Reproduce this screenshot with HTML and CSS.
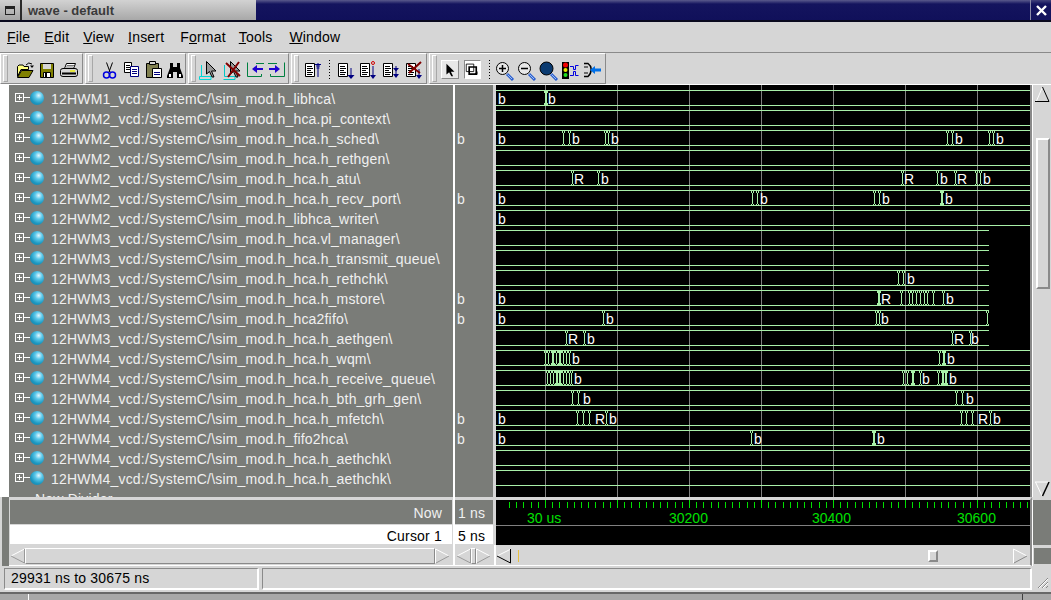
FILE: index.html
```html
<!DOCTYPE html>
<html lang="en">
<head>
<meta charset="utf-8">
<title>wave - default</title>
<link rel="stylesheet" href="styles.css">
</head>
<body>
<svg class="sprite" width="0" height="0" aria-hidden="true">
  <defs>
    <path id="full" d="M496 .5H1030M496 15.500H1030"/>
    <path id="short" d="M496 .5H989M496 15.500H989"/>
    <path id="t" d="M-.5 .5V2.500M1.500 .5V2.500M.5 2.500V13.500M-.5 13.500V15.500M1.500 13.500V15.500"/>
    <path id="T" d="M-1 0H3V3H2V13H3V16H-1V13H0V3H-1Z"/>
    <symbol id="doc" viewBox="0 0 22 22">
      <path d="M3.500 4.500H12.500V17.500H3.500Z" fill="#fff" stroke="#000"/>
      <path d="M5 7.500H10M5 9.500H11M5 11.500H9M5 13.500H11M5 15.500H10" stroke="#000" fill="none"/>
    </symbol>
    <symbol id="mag" viewBox="0 0 22 22">
      <path d="M14 15L20 21" stroke="#2a5fd0" stroke-width="3" fill="none"/>
      <path d="M14.500 15.500L19 20" stroke="#9ec0f0" fill="none"/>
    </symbol>
  </defs>
</svg>
<div class="window">
  <header class="titlebar">
    <div class="wm-btn"><span class="wm-glyph"></span></div>
    <div class="title">wave - default</div>
    <div class="title-fill"></div>
    <div class="wm-close">
      <svg width="21" height="21" viewBox="0 0 21 21"><path d="M6 6L15 15M15 6L6 15" stroke="#fff" stroke-width="2.400" fill="none"/></svg>
    </div>
  </header>

  <nav class="menubar">
    <span><u>F</u>ile</span><span><u>E</u>dit</span><span><u>V</u>iew</span><span><u>I</u>nsert</span><span>F<u>o</u>rmat</span><span><u>T</u>ools</span><span><u>W</u>indow</span>
  </nav>

  <div class="toolbar">
    <div class="group g1">
      <svg class="ico" viewBox="0 0 22 22"><path d="M4.500 17.500V7.500L6 6H10L11 7.500H15.500V10.500H8L4.500 17.500Z" fill="#ffff80" stroke="#000"/><path d="M4.500 18.500L8.500 11.500H20L16 18.500Z" fill="#808000" stroke="#000"/><path d="M13 6Q15.500 2.500 19 5" stroke="#000" fill="none"/><path d="M17 6.500H21L19 9Z" fill="#000"/></svg>
      <svg class="ico" viewBox="0 0 22 22"><path d="M5.500 4.500H18.500V18.500H5.500Z" fill="#808000" stroke="#000"/><path d="M8 5H16V10H8Z" fill="#d6d6d6"/><path d="M8.500 13.500H15.500V18.500H8.500Z" fill="#fff" stroke="#000"/><path d="M10 14H12V18H10Z" fill="#000"/></svg>
      <svg class="ico" viewBox="0 0 22 22"><path d="M7.500 9.500L9.500 4.500H18.500L16.500 9.500Z" fill="#fff" stroke="#000"/><path d="M10 6.500H17M9 8H16" stroke="#777"/><path d="M3.500 11.500Q3.500 9.500 6 9.500H18Q20.500 9.500 20.500 11.500V15.500Q20.500 17.500 18 17.500H6Q3.500 17.500 3.500 15.500Z" fill="#d6d6d6" stroke="#000"/><path d="M5 14.500H19" stroke="#000" stroke-width="2"/><path d="M13 11H18V13H13Z" fill="#e8e840"/></svg>
    </div>
    <div class="group g2">
      <svg class="ico" viewBox="0 0 22 22"><path d="M8.500 3.500L12 13M14.500 3.500L11 13" stroke="#000" fill="none"/><circle cx="8.500" cy="16" r="3" fill="none" stroke="#0000e0" stroke-width="1.500"/><circle cx="14.500" cy="16" r="3" fill="none" stroke="#0000e0" stroke-width="1.500"/></svg>
      <svg class="ico" viewBox="0 0 22 22"><path d="M4.500 3.500H11.500V13.500H4.500Z" fill="#fff" stroke="#000"/><path d="M6 6.500H10M6 8.500H10M6 10.500H10" stroke="#000"/><path d="M10.500 7.500H18.500V17.500H10.500Z" fill="#fff" stroke="#000080"/><path d="M12 10.500H17M12 12.500H17M12 14.500H17" stroke="#000080"/></svg>
      <svg class="ico" viewBox="0 0 22 22"><path d="M4.500 4.500H16.500V18.500H4.500Z" fill="#808050" stroke="#000"/><path d="M7.500 2.500H13.500V5.500H7.500Z" fill="#d6d6d6" stroke="#000"/><path d="M10.500 9.500H19.500V18.500H10.500Z" fill="#fff" stroke="#000"/><path d="M12 13.500H18M12 15.500H18" stroke="#000080"/></svg>
      <svg class="ico" viewBox="0 0 22 22"><path d="M6 4H9V8H13V4H16V9L19 17V19H13V13H9V19H3V17L6 9Z" fill="#000"/><path d="M5 15H7V18H5ZM15 15H17V18H15Z" fill="#fff"/></svg>
    </div>
    <div class="group g3">
      <svg class="ico wide" viewBox="0 0 26 22"><path d="M5.500 6V17.500H15V20.500H3.500V17.500H15" fill="none" stroke="#00d8d8"/><path d="M10.500 2.500V15L13.500 12.500L16 18H18L15.500 12H20Z" fill="#999" stroke="#000"/></svg>
      <svg class="ico" viewBox="0 0 22 22"><path d="M2.500 6V17.500H13V20.500H1.500" fill="none" stroke="#00c8c8"/><path d="M8.500 2.500V15L11.500 12.500L14 18H16L13.500 12H18Z" fill="#999" stroke="#000"/><path d="M4 4L18 17M17 3L6 18" stroke="#800000" stroke-width="2" fill="none"/></svg>
      <svg class="ico" viewBox="0 0 22 22"><path d="M3.500 3.500V17.500H17.500V15" fill="none" stroke="#008040"/><path d="M12 4.500H20" stroke="#008040"/><path d="M8 10L13 6V9H19V11H13V14Z" fill="#2000d0"/></svg>
      <svg class="ico" viewBox="0 0 22 22"><path d="M18.500 3.500V17.500H4.500V15" fill="none" stroke="#008040"/><path d="M2 4.500H11" stroke="#008040"/><path d="M14 10L9 6V9H3V11H9V14Z" fill="#2000d0"/></svg>
    </div>
    <div class="group g4">
      <svg class="ico" viewBox="0 0 22 22"><use href="#doc" width="22" height="22"/><path d="M13 5.500H19M16 4V18M14 7H18M14.500 9H17.500" stroke="#000080" fill="none"/></svg>
      <span class="dots"></span>
      <svg class="ico" viewBox="0 0 22 22"><use href="#doc" width="22" height="22"/><path d="M16 9V17" stroke="#000080"/><path d="M12.500 16H19.500L16 20Z" fill="#000080"/></svg>
      <svg class="ico" viewBox="0 0 22 22"><use href="#doc" width="22" height="22"/><path d="M16 7V17" stroke="#000080"/><path d="M13 16H19L16 20Z" fill="#000080"/><circle cx="16" cy="4" r="1.500" fill="none" stroke="#d00000"/></svg>
      <svg class="ico step" viewBox="0 0 22 22"><use href="#doc" width="22" height="22"/><path d="M16 7V17" stroke="#000080"/><path d="M13 9H19L16 12.500ZM13 15H19L16 19Z" fill="#000080"/></svg>
      <svg class="ico step" viewBox="0 0 22 22"><use href="#doc" width="22" height="22"/><path d="M16 10V17" stroke="#000080"/><path d="M13 16H19L16 20Z" fill="#000080"/><path d="M6 14L18 3M5 5L17 14" stroke="#800000" stroke-width="2" fill="none"/></svg>
    </div>
    <div class="group g5">
      <div class="tool raised"><svg width="16" height="16" viewBox="0 0 18 18"><path d="M5 2V14L8 11.500L10.500 16H12.500L10 11H14Z" fill="#000"/></svg></div>
      <div class="tool pressed"><svg width="15" height="15" viewBox="0 0 18 18"><path d="M1.500 2.500H10.500V11.500H1.500Z" fill="none" stroke="#000"/><path d="M5 6H13.500V14.500H5Z" fill="none" stroke="#000" stroke-width="2"/><path d="M11 15L15 15L15 11Z" fill="#000"/></svg></div>
      <span class="dots"></span>
      <svg class="ico" viewBox="0 0 22 22"><use href="#mag" width="22" height="22"/><circle cx="9.500" cy="9.500" r="6" fill="#e8e8e8" stroke="#000"/><path d="M6 9.500H13M9.500 6V13" stroke="#000" stroke-width="1.500"/></svg>
      <svg class="ico" viewBox="0 0 22 22"><use href="#mag" width="22" height="22"/><circle cx="9.500" cy="9.500" r="6" fill="#e8e8e8" stroke="#000"/><path d="M6 9.500H13" stroke="#000" stroke-width="1.500"/></svg>
      <svg class="ico" viewBox="0 0 22 22"><use href="#mag" width="22" height="22"/><circle cx="9.500" cy="9.500" r="6.500" fill="#0a3a70" stroke="#000"/></svg>
      <svg class="ico" viewBox="0 0 22 22"><path d="M3 3H10V20H3Z" fill="#000"/><circle cx="6.500" cy="6" r="2.500" fill="#f00000"/><circle cx="6.500" cy="11" r="2" fill="#e8e800"/><circle cx="6.500" cy="16" r="2" fill="#20e020"/><path d="M11 7.500H14.500V10.500H16.500V6.500H19.500M11 16.500H14.500V12.500H16.500V16.500H19.500" fill="none" stroke="#0000e0"/></svg>
      <svg class="ico" viewBox="0 0 22 22"><path d="M3 4.500H7Q10 7 10 9V11Q10 15 7 17.500H3" fill="none" stroke="#000" stroke-width="1.500"/><path d="M3 8H7M3 14H7" stroke="#000"/><path d="M9 11L14 7V9.500H20V12.500H14V15Z" fill="#0070e8"/></svg>
    </div>
  </div>

  <main class="panes">
    <div class="strip white"></div>
    <div class="names">
      <div class="row"><span class="tree"></span><span class="ball"></span><span>12HWM1_vcd:/SystemC/\sim_mod.h_libhca\</span></div>
      <div class="row"><span class="tree"></span><span class="ball"></span><span>12HWM2_vcd:/SystemC/\sim_mod.h_hca.pi_context\</span></div>
      <div class="row"><span class="tree"></span><span class="ball"></span><span>12HWM2_vcd:/SystemC/\sim_mod.h_hca.h_sched\</span></div>
      <div class="row"><span class="tree"></span><span class="ball"></span><span>12HWM2_vcd:/SystemC/\sim_mod.h_hca.h_rethgen\</span></div>
      <div class="row"><span class="tree"></span><span class="ball"></span><span>12HWM2_vcd:/SystemC/\sim_mod.h_hca.h_atu\</span></div>
      <div class="row"><span class="tree"></span><span class="ball"></span><span>12HWM2_vcd:/SystemC/\sim_mod.h_hca.h_recv_port\</span></div>
      <div class="row"><span class="tree"></span><span class="ball"></span><span>12HWM2_vcd:/SystemC/\sim_mod.h_libhca_writer\</span></div>
      <div class="row"><span class="tree"></span><span class="ball"></span><span>12HWM3_vcd:/SystemC/\sim_mod.h_hca.vl_manager\</span></div>
      <div class="row"><span class="tree"></span><span class="ball"></span><span>12HWM3_vcd:/SystemC/\sim_mod.h_hca.h_transmit_queue\</span></div>
      <div class="row"><span class="tree"></span><span class="ball"></span><span>12HWM3_vcd:/SystemC/\sim_mod.h_hca.h_rethchk\</span></div>
      <div class="row"><span class="tree"></span><span class="ball"></span><span>12HWM3_vcd:/SystemC/\sim_mod.h_hca.h_mstore\</span></div>
      <div class="row"><span class="tree"></span><span class="ball"></span><span>12HWM3_vcd:/SystemC/\sim_mod.h_hca2fifo\</span></div>
      <div class="row"><span class="tree"></span><span class="ball"></span><span>12HWM3_vcd:/SystemC/\sim_mod.h_hca.h_aethgen\</span></div>
      <div class="row"><span class="tree"></span><span class="ball"></span><span>12HWM4_vcd:/SystemC/\sim_mod.h_hca.h_wqm\</span></div>
      <div class="row"><span class="tree"></span><span class="ball"></span><span>12HWM4_vcd:/SystemC/\sim_mod.h_hca.h_receive_queue\</span></div>
      <div class="row"><span class="tree"></span><span class="ball"></span><span>12HWM4_vcd:/SystemC/\sim_mod.h_hca.h_bth_grh_gen\</span></div>
      <div class="row"><span class="tree"></span><span class="ball"></span><span>12HWM4_vcd:/SystemC/\sim_mod.h_hca.h_mfetch\</span></div>
      <div class="row"><span class="tree"></span><span class="ball"></span><span>12HWM4_vcd:/SystemC/\sim_mod.h_fifo2hca\</span></div>
      <div class="row"><span class="tree"></span><span class="ball"></span><span>12HWM4_vcd:/SystemC/\sim_mod.h_hca.h_aethchk\</span></div>
      <div class="row"><span class="tree"></span><span class="ball"></span><span>12HWM4_vcd:/SystemC/\sim_mod.h_hca.h_aethchk\</span></div>
      <div class="row divider"><span>New Divider</span></div>
    </div>
    <div class="values">
      <div class="val"></div><div class="val"></div><div class="val">b</div><div class="val"></div><div class="val"></div><div class="val">b</div><div class="val"></div><div class="val"></div><div class="val"></div><div class="val"></div><div class="val">b</div><div class="val">b</div><div class="val"></div><div class="val"></div><div class="val"></div><div class="val"></div><div class="val">b</div><div class="val">b</div>
    </div>
    <div class="wave">
      <svg class="wave-svg" width="534" height="412" viewBox="496 85 534 412">
        <path class="grid" d="M545.500 85V497M617.500 85V497M689.500 85V497M761.500 85V497M833.500 85V497M905.500 85V497M977.500 85V497"/>
        <g class="sig">
          <g transform="translate(0,90)"><use href="#full"/><use class="fill" href="#T" x="545"/><text x="548" y="14">b</text><text x="498" y="14">b</text></g>
          <g transform="translate(0,110)"><use href="#full"/></g>
          <g transform="translate(0,130)"><use href="#full"/><text x="498" y="14">b</text><use href="#t" x="563"/><use href="#t" x="569"/><text x="572" y="14">b</text><use href="#t" x="605"/><use href="#t" x="608"/><text x="611" y="14">b</text><use href="#t" x="947"/><use href="#t" x="952"/><text x="955" y="14">b</text><use href="#t" x="989"/><use href="#t" x="993"/><text x="996" y="14">b</text></g>
          <g transform="translate(0,150)"><use href="#full"/></g>
          <g transform="translate(0,170)"><use href="#full"/><use href="#t" x="572"/><text x="574" y="14">R</text><use href="#t" x="598"/><text x="601" y="14">b</text><use href="#t" x="902"/><text x="904" y="14">R</text><use href="#t" x="937"/><text x="940" y="14">b</text><use href="#t" x="955"/><text x="957" y="14">R</text><use href="#t" x="976"/><use href="#t" x="980"/><text x="983" y="14">b</text></g>
          <g transform="translate(0,190)"><use href="#full"/><text x="498" y="14">b</text><use href="#t" x="752"/><use href="#t" x="757"/><text x="760" y="14">b</text><use href="#t" x="874"/><use href="#t" x="879"/><text x="882" y="14">b</text><use class="fill" href="#T" x="941"/><text x="945" y="14">b</text></g>
          <g transform="translate(0,210)"><use href="#full"/><text x="498" y="14">b</text></g>
          <g transform="translate(0,230)"><use href="#short"/></g>
          <g transform="translate(0,250)"><use href="#short"/></g>
          <g transform="translate(0,270)"><use href="#short"/><use href="#t" x="898"/><use href="#t" x="903"/><text x="907" y="14">b</text></g>
          <g transform="translate(0,290)"><use href="#short"/><text x="498" y="14">b</text><use class="fill" href="#T" x="878"/><text x="881" y="14">R</text><use href="#t" x="901"/><use href="#t" x="909"/><use href="#t" x="912"/><use href="#t" x="916"/><use href="#t" x="920"/><use href="#t" x="924"/><use href="#t" x="927"/><use href="#t" x="933"/><use href="#t" x="943"/><text x="946" y="14">b</text></g>
          <g transform="translate(0,310)"><use href="#short"/><text x="498" y="14">b</text><use href="#t" x="603"/><text x="606" y="14">b</text><use href="#t" x="876"/><use href="#t" x="879"/><text x="881" y="14">b</text><use href="#t" x="987"/></g>
          <g transform="translate(0,330)"><use href="#short"/><use href="#t" x="566"/><text x="568" y="14">R</text><use href="#t" x="584"/><text x="587" y="14">b</text><use href="#t" x="952"/><text x="954" y="14">R</text><use href="#t" x="970"/><text x="971" y="14">b</text></g>
          <g transform="translate(0,350)"><use href="#full"/><use href="#t" x="545"/><use href="#t" x="548"/><use class="fill" href="#T" x="552"/><use href="#t" x="556"/><use class="fill" href="#T" x="559"/><use href="#t" x="563"/><use href="#t" x="566"/><use href="#t" x="569"/><text x="572" y="14">b</text><use href="#t" x="939"/><use class="fill" href="#T" x="943"/><text x="947" y="14">b</text></g>
          <g transform="translate(0,370)"><use href="#full"/><use href="#t" x="547"/><use href="#t" x="550"/><use href="#t" x="553"/><use class="fill" href="#T" x="556"/><use class="fill" href="#T" x="559"/><use href="#t" x="563"/><use href="#t" x="566"/><use href="#t" x="569"/><use href="#t" x="571"/><text x="574" y="14">b</text><use href="#t" x="903"/><use href="#t" x="907"/><use class="fill" href="#T" x="912"/><use href="#t" x="920"/><text x="922" y="14">b</text><use href="#t" x="938"/><use class="fill" href="#T" x="942"/><use class="fill" href="#T" x="945"/><text x="949" y="14">b</text></g>
          <g transform="translate(0,390)"><use href="#full"/><use href="#t" x="572"/><use href="#t" x="578"/><text x="583" y="14">b</text><use href="#t" x="956"/><use href="#t" x="962"/><text x="966" y="14">b</text></g>
          <g transform="translate(0,410)"><use href="#full"/><text x="498" y="14">b</text><use href="#t" x="577"/><use href="#t" x="583"/><use href="#t" x="589"/><text x="595" y="14">R</text><use href="#t" x="606"/><text x="609" y="14">b</text><use href="#t" x="961"/><use href="#t" x="966"/><use href="#t" x="972"/><text x="978" y="14">R</text><use href="#t" x="990"/><text x="993" y="14">b</text></g>
          <g transform="translate(0,430)"><use href="#full"/><text x="498" y="14">b</text><use href="#t" x="751"/><text x="754" y="14">b</text><use class="fill" href="#T" x="873"/><text x="877" y="14">b</text></g>
          <g transform="translate(0,450)"><use href="#full"/></g>
          <g transform="translate(0,470)"><use href="#full"/></g>
        </g>
      </svg>
    </div>
    <div class="vscroll">
      <svg class="arrow-v" width="17" height="16" viewBox="0 0 17 16"><path d="M2.500 15L8.500 1" stroke="#fff" fill="none"/><path d="M8.500 1L15 15.500H1" stroke="#000" fill="none"/></svg>
      <div class="vtrack"><div class="vthumb"></div></div>
      <svg class="arrow-v" width="17" height="16" viewBox="0 0 17 16"><path d="M1 1H15M1.500 1L8 15" stroke="#fff" fill="none"/><path d="M15 1L8.500 15" stroke="#000" stroke-width="1.500" fill="none"/></svg>
    </div>

    <div class="strip"></div>
    <div class="time-names">
      <div class="now">Now</div>
      <div class="cursor">Cursor 1</div>
    </div>
    <div class="time-values">
      <div class="now">1 ns</div>
      <div class="cursor">5 ns</div>
    </div>
    <div class="ruler">
      <svg width="534" height="45" viewBox="496 500 534 45">
        <defs>
          <pattern id="ticks" x="49" y="0" width="72" height="8" patternUnits="userSpaceOnUse" patternTransform="translate(496,500)">
            <path d="M.5 0V8M7.500 2V8M14.500 2V8M22.500 2V8M29.500 2V8M36.500 2V8M43.500 2V8M50.500 2V8M58.500 2V8M65.500 2V8" stroke="#00e000" fill="none"/>
          </pattern>
        </defs>
        <rect x="503" y="500" width="527" height="8" fill="url(#ticks)"/>
        <path d="M496 525.500H1030" stroke="#808080"/>
        <text class="lab" x="527" y="523">30 us</text>
        <text class="lab" x="669" y="523">30200</text>
        <text class="lab" x="812" y="523">30400</text>
        <text class="lab" x="957" y="523">30600</text>
      </svg>
    </div>
    <div class="corner"></div>

    <div class="strip"></div>
    <div class="hscroll">
      <svg class="arr" width="15" height="16" viewBox="0 0 15 16"><path d="M14.500 1L1 8" stroke="#fff" fill="none"/><path d="M1 8L14.500 15V1" stroke="#999" fill="none"/></svg>
      <div class="track plain"></div>
      <svg class="arr" width="15" height="16" viewBox="0 0 15 16"><path d="M.5 15V1L14 8" stroke="#fff" fill="none"/><path d="M1 15L14 8" stroke="#999" fill="none"/></svg>
    </div>
    <div class="hscroll">
      <svg class="arr" width="15" height="16" viewBox="0 0 15 16"><path d="M14.500 1L1 8" stroke="#fff" fill="none"/><path d="M1 8L14.500 15V1" stroke="#999" fill="none"/></svg>
      <div class="track plain"></div>
      <svg class="arr" width="15" height="16" viewBox="0 0 15 16"><path d="M.5 15V1L14 8" stroke="#fff" fill="none"/><path d="M1 15L14 8" stroke="#999" fill="none"/></svg>
    </div>
    <div class="hscroll wide">
      <svg class="arr" width="15" height="16" viewBox="0 0 15 16"><path d="M15 1L1 8" stroke="#fff" fill="none"/><path d="M1 8L14.500 15V1" stroke="#000" fill="none"/></svg>
      <div class="track"><span class="mark"></span><span class="hthumb"></span></div>
      <svg class="arr" width="15" height="16" viewBox="0 0 15 16"><path d="M.5 15V1L14 8" stroke="#fff" fill="none"/><path d="M1 15L14 8" stroke="#888" fill="none"/></svg>
    </div>
    <div class="corner2"><span class="corner2-box"></span></div>
  </main>

  <footer class="status">
    <div class="cell first">29931 ns to 30675 ns</div>
    <div class="cell second"></div>
    <svg class="grip" width="19" height="22" viewBox="0 0 19 22"><path d="M6 20L16 10M10 20L16 14M14 20L16 18" stroke="#888" fill="none"/><path d="M7 20L16 11M11 20L16 15" stroke="#fff" fill="none"/></svg>
  </footer>
  <div class="desk"><span class="desk-a"></span><span class="desk-b"></span></div>
</div>
</body>
</html>
```

FILE: styles.css
```css
* { box-sizing: border-box; }
html, body { margin: 0; padding: 0; }
body {
  width: 1051px;
  height: 600px;
  overflow: hidden;
  background: #d6d6d6;
  font: 14px "Liberation Sans", Arial, sans-serif;
  letter-spacing: .19px;
  color: #000;
}
.sprite { display: block; height: 0; }
.window { display: flex; flex-direction: column; height: 600px; }

.titlebar { display: flex; height: 22px; border-bottom: 2px solid #0a0a1e; }
.wm-btn {
  width: 22px;
  display: flex;
  align-items: center;
  justify-content: center;
  background: linear-gradient(#d0d0d0, #a4a4a4);
  border-right: 2px solid #2a2a2a;
}
.wm-glyph { width: 10px; height: 9px; border: 1px solid #222; border-top-width: 3px; }
.title {
  width: 234px;
  padding-left: 6px;
  line-height: 21px;
  font-weight: bold;
  font-size: 13px;
  letter-spacing: 0;
  color: #3a3a3a;
  background: linear-gradient(#d2d2d2, #a8a8a8);
}
.title-fill { flex: 1; background: linear-gradient(#5a5a8c 0, #14145e 4px, #10105a 100%); }
.wm-close {
  width: 21px;
  background: linear-gradient(#44447c 0, #14145e 4px);
  border-left: 1px solid #8a8aa8;
}

.menubar {
  height: 30px;
  display: flex;
  align-items: center;
  gap: 14px;
  padding-left: 7px;
}
.menubar span:nth-child(5) { margin-left: 2px; }
.menubar span:nth-child(6) { margin-left: -1px; }
.menubar span:nth-child(7) { margin-left: 3px; }

.toolbar {
  height: 33px;
  display: flex;
  gap: 2px;
  border-top: 1px solid #8a8a8a;
  border-bottom: 1px solid #fff;
}
.group {
  display: flex;
  align-items: center;
  height: 31px;
  border-top: 1px solid #fff;
  border-right: 1px solid #8a8a8a;
  border-bottom: 1px solid #8a8a8a;
  border-left: 1px solid #fff;
  padding-left: 2px;
}
.group::before {
  content: "";
  width: 3px;
  height: 25px;
  flex: none;
  border: 1px solid #a8a8a8;
  border-top-color: #fff;
  border-left-color: #fff;
  background: #d6d6d6;
}
.g1 { width: 83px; }
.g2 { width: 101px; }
.g3 { width: 101px; }
.g4 { width: 136px; }
.g5 { width: 177px; }
.g1 .ico:first-of-type { margin-left: 5px; }
.g2 .ico:first-of-type { margin-left: 5px; }
.g3 .ico:first-of-type { margin-left: 0; }
.g4 .ico:first-of-type { margin-left: 3px; }
.ico { width: 22px; height: 22px; flex: none; margin-top: 2px; }
.ico.wide { width: 26px; }
.ico.step { margin-left: 1px; }
.dots {
  width: 1px;
  height: 20px;
  flex: none;
  margin: 2px 5px 0 5px;
  background: repeating-linear-gradient(#000 0 1px, transparent 1px 3px);
}
.tool {
  height: 19px;
  flex: none;
  display: flex;
  align-items: center;
  justify-content: center;
  margin-top: 2px;
}
.g5 .raised { margin-left: 4px; border: 1px solid; border-color: #fff #8a8a8a #8a8a8a #fff; background: #e8e8e8; width: 18px; }
.g5 .pressed { background: #fff; border: 1px solid; border-color: #8a8a8a #fff #fff #8a8a8a; margin-left: 5px; width: 17px; }
.g5 .tool + .dots { margin-left: 8px; margin-right: 3px; }

.panes {
  display: grid;
  grid-template-columns: 9px 446px 41px 536px 19px;
  grid-template-rows: 412px 48px 21px;
}
.strip { background: #7a7c78; border-left: 2px solid #d6d6d6; }
.strip.white { background: #fff; border: 0; }

.names {
  background: #7a7c78;
  color: #f0f0f0;
  padding-top: 4px;
  border-right: 2px solid #fff;
  overflow: hidden;
}
.row { height: 20px; display: flex; align-items: center; white-space: nowrap; }
.tree {
  position: relative;
  width: 9px;
  height: 9px;
  margin-left: 6px;
  margin-top: -3px;
  border: 1px solid #fff;
  background:
    linear-gradient(#fff, #fff) center / 5px 1px no-repeat,
    linear-gradient(#fff, #fff) center / 1px 5px no-repeat;
  flex: none;
}
.tree::after {
  content: "";
  position: absolute;
  left: 8px;
  top: 3px;
  width: 6px;
  height: 1px;
  background: #fff;
}
.ball {
  position: relative;
  width: 14px;
  height: 14px;
  margin-left: 6px;
  margin-right: 7px;
  margin-top: -2px;
  border-radius: 50%;
  flex: none;
  background: radial-gradient(circle at 62% 32%, #e4f8ff 0, #5cc8ea 28%, #1c98c0 62%, #1478a8 100%);
}
.divider { padding-left: 26px; }

.values {
  background: #7a7c78;
  color: #f0f0f0;
  padding-top: 4px;
  border-right: 3px solid #d6d6d6;
}
.val { height: 20px; line-height: 20px; padding-left: 2px; }

.wave { background: #000; border-right: 2px solid #8a8a8a; overflow: hidden; }
.wave-svg { display: block; shape-rendering: crispEdges; background: #000; }
.grid { stroke: #808080; fill: none; }
.sig use { stroke: #a8f0a8; fill: none; }
.sig use.fill { fill: #a8f0a8; stroke: none; }
.sig text { fill: #fff; font: 14px "Liberation Sans", Arial, sans-serif; letter-spacing: 0; shape-rendering: auto; }

.vscroll {
  display: flex;
  flex-direction: column;
  padding: 1px 1px 0 1px;
  border-left: 1px solid #fff;
  background: #d6d6d6;
}
.arrow-v { display: block; flex: none; }
.vtrack { flex: 1; padding-top: 36px; }
.vthumb {
  width: 14px;
  height: 151px;
  margin-left: 2px;
  border: 2px solid;
  border-color: #fff #8a8a8a #8a8a8a #fff;
}

.time-names, .time-values {
  padding: 3px 3px 1px 1px;
  background: #d6d6d6;
  display: flex;
  flex-direction: column;
  gap: 1px;
}
.time-values { padding: 3px 3px 1px 0; }
.now { height: 24px; background: #7a7c78; color: #f0f0f0; line-height: 26px; }
.cursor { height: 19px; background: #fff; line-height: 22px; }
.time-names .now, .time-names .cursor { text-align: right; padding-right: 10px; }
.time-values .now, .time-values .cursor { padding-left: 3px; }
.time-names { border-right: 2px solid #fff; padding-right: 1px; }
.ruler { background: #000; border-top: 3px solid #d6d6d6; border-right: 2px solid #8a8a8a; }
.ruler svg { display: block; shape-rendering: crispEdges; }
.ruler .lab { fill: #00e000; font: 14px "Liberation Sans", Arial, sans-serif; letter-spacing: 0; shape-rendering: auto; }
.corner { background: #7a7c78; border-left: 1px solid #fff; margin-top: 3px; }

.hscroll {
  display: flex;
  align-items: center;
  padding: 3px 3px 2px 1px;
  border-right: 2px solid #fff;
  border-bottom: 1px solid #fff;
}
.hscroll .arr { flex: none; }
.track { flex: 1; height: 16px; position: relative; }
.track.plain { border: 1px solid; border-color: #fff #8a8a8a #8a8a8a #fff; }
.mark { position: absolute; left: 7px; top: 2px; width: 1px; height: 12px; background: #e8c040; }
.hthumb {
  position: absolute;
  right: 75px;
  top: 2px;
  width: 10px;
  height: 12px;
  border: 2px solid;
  border-color: #fff #8a8a8a #8a8a8a #fff;
}
.hscroll.wide { padding: 3px 2px 2px 0; border-right: 2px solid #8a8a8a; }
.corner2 { padding: 3px 0 2px 1px; border-left: 1px solid #fff; }
.corner2-box { display: block; height: 16px; background: #7a7c78; }

.status { height: 26px; display: flex; padding: 2px 0 2px 4px; gap: 3px; }
.cell {
  border: 1px solid;
  border-color: #8a8a8a #fff #fff #8a8a8a;
  border-width: 1px 2px 2px 1px;
  line-height: 19px;
}
.first { width: 255px; padding-left: 6px; }
.second { flex: 1; }
.grip { flex: none; margin-left: -3px; }

.desk {
  flex: 1;
  display: flex;
  background: #a8a8a8;
  border-top: 2px solid #686868;
  padding-left: 28px;
}
.desk-a { width: 1px; background: #fff; }
.desk-b { width: 1px; background: #404040; margin-left: 993px; }
```
